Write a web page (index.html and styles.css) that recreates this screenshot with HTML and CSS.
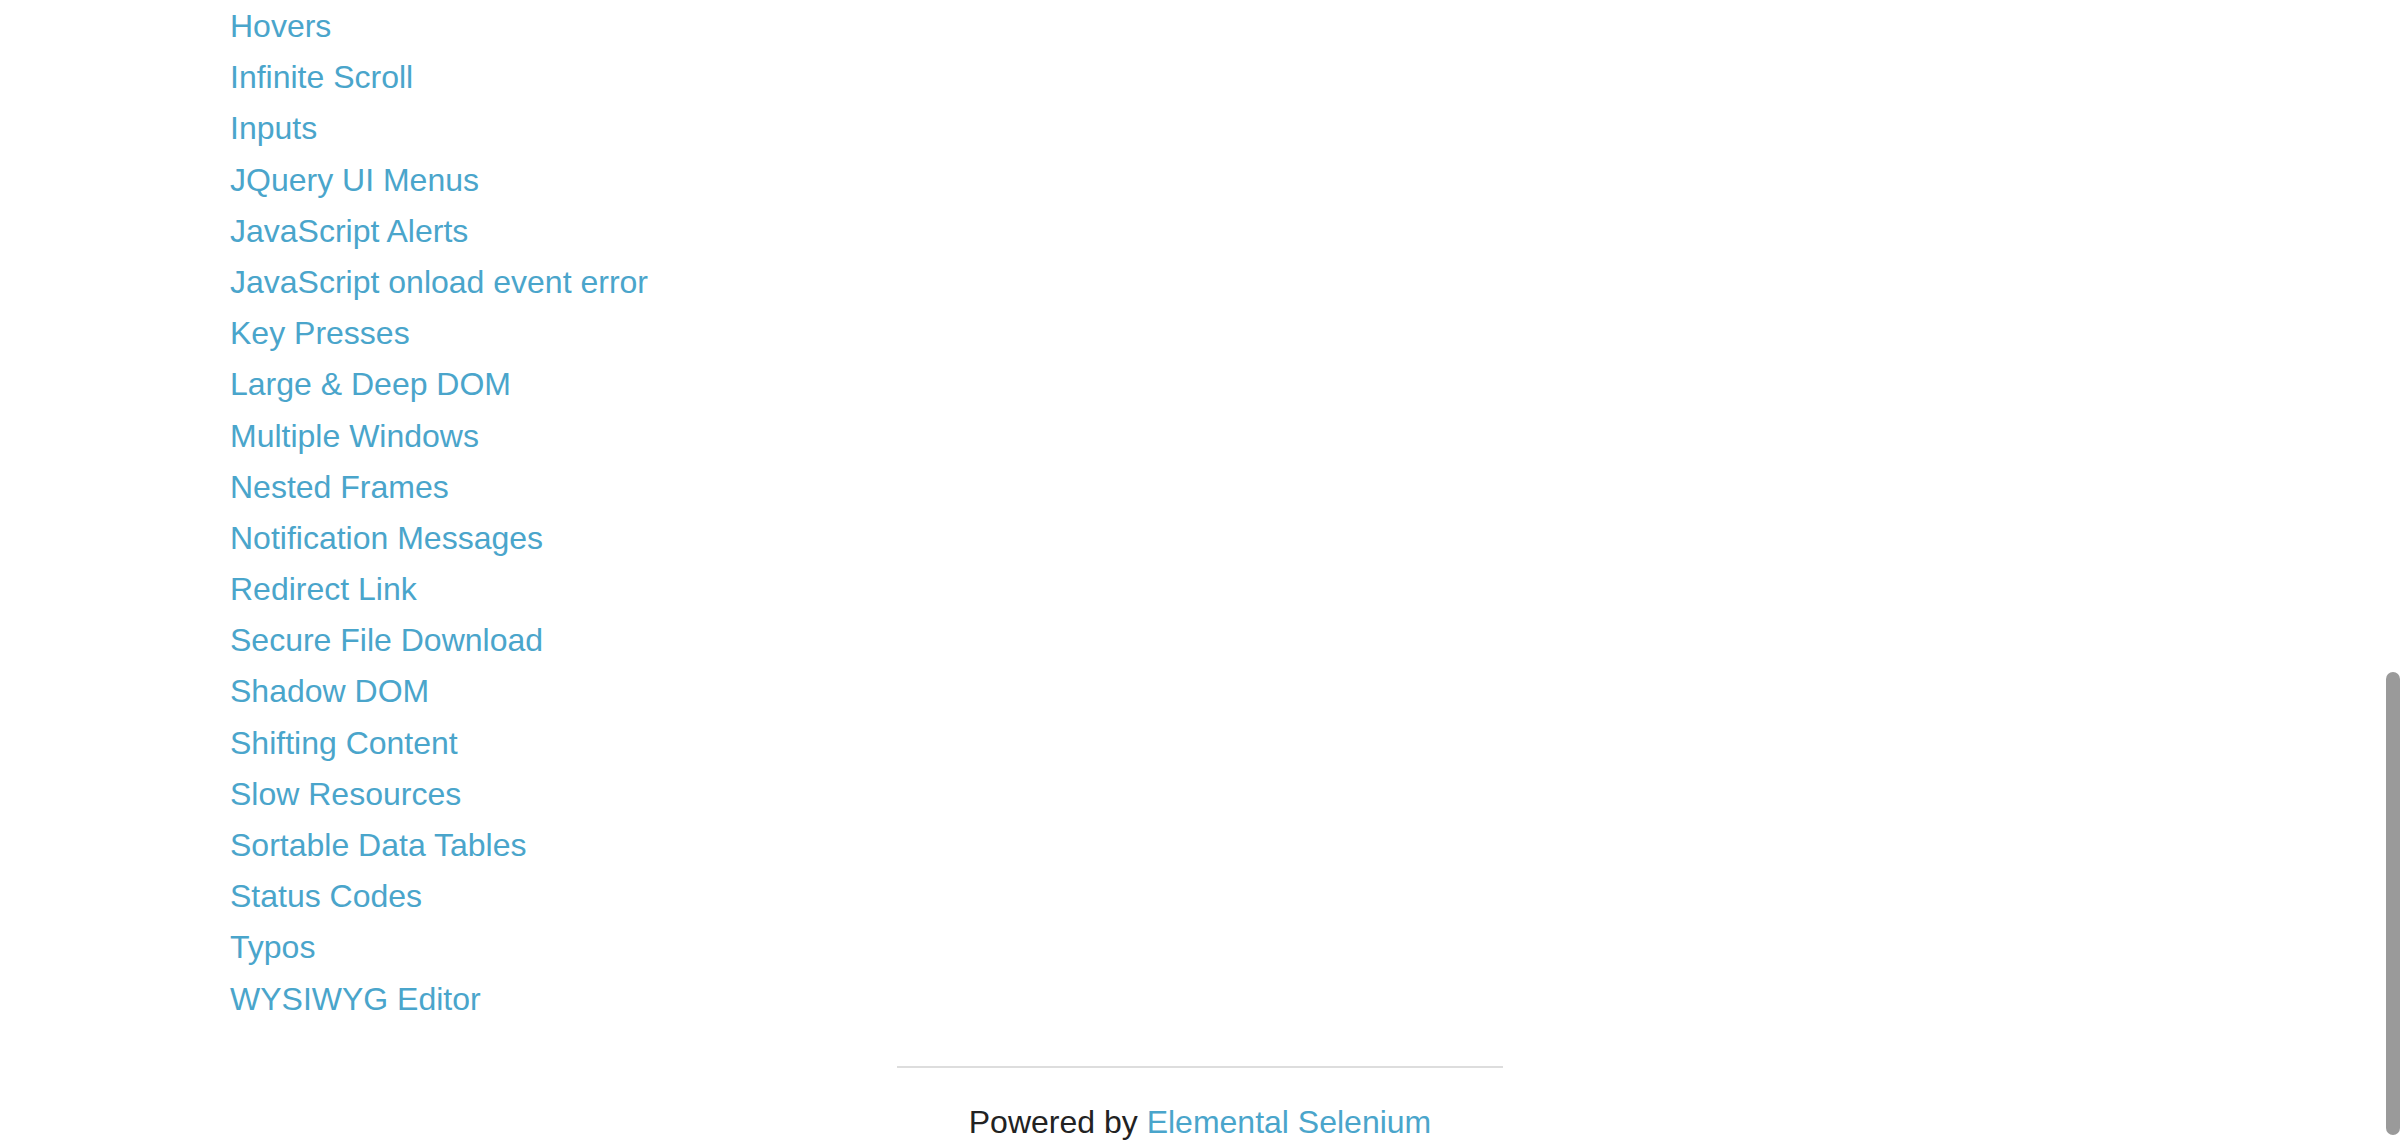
FILE: index.html
```html
<!DOCTYPE html>
<html lang="en">
<head>
<meta charset="utf-8">
<title>The Internet</title>
<link rel="stylesheet" href="styles.css">
</head>
<body>
<div class="row">
  <div class="columns">
    <ul class="links">
      <li><a href="#">Hovers</a></li>
      <li><a href="#">Infinite Scroll</a></li>
      <li><a href="#">Inputs</a></li>
      <li><a href="#">JQuery UI Menus</a></li>
      <li><a href="#">JavaScript Alerts</a></li>
      <li><a href="#">JavaScript onload event error</a></li>
      <li><a href="#">Key Presses</a></li>
      <li><a href="#">Large &amp; Deep DOM</a></li>
      <li><a href="#">Multiple Windows</a></li>
      <li><a href="#">Nested Frames</a></li>
      <li><a href="#">Notification Messages</a></li>
      <li><a href="#">Redirect Link</a></li>
      <li><a href="#">Secure File Download</a></li>
      <li><a href="#">Shadow DOM</a></li>
      <li><a href="#">Shifting Content</a></li>
      <li><a href="#">Slow Resources</a></li>
      <li><a href="#">Sortable Data Tables</a></li>
      <li><a href="#">Status Codes</a></li>
      <li><a href="#">Typos</a></li>
      <li><a href="#">WYSIWYG Editor</a></li>
    </ul>
  </div>
</div>
<div class="row footer-row">
  <div class="footer-col">
    <hr class="rule">
    <div class="powered">Powered by <a href="#">Elemental Selenium</a></div>
  </div>
</div>
<div class="scrollbar"><div class="thumb"></div></div>
</body>
</html>
```

FILE: styles.css
```css
html, body {
  margin: 0;
  padding: 0;
}
body {
  position: relative;
  height: 1140px;
  overflow: hidden;
  background: #fff;
  color: #222;
  font-family: "Liberation Sans", Arial, Helvetica, sans-serif;
  font-size: 32px;
}
a {
  color: #4aa5cb;
  text-decoration: none;
}
.row {
  max-width: 2000px;
  margin: 0 auto;
}
.columns {
  padding: 1px 30px 0;
}
.links {
  margin: 0;
  padding: 0;
  list-style: none;
  line-height: 1.6;
}
.footer-col {
  width: 666.667px;
  box-sizing: border-box;
  margin: 0 auto;
  padding: 0 30px;
}
.rule {
  margin: 41px 0 36px;
  height: 0;
  border: 0;
  border-top: 2px solid #ddd;
}
.powered {
  text-align: center;
  line-height: normal;
}
.scrollbar {
  position: absolute;
  top: 0;
  right: 0;
  width: 18px;
  height: 1140px;
}
.thumb {
  position: absolute;
  left: 4px;
  top: 672px;
  width: 14px;
  height: 463px;
  border-radius: 7px;
  background: #9a9a9a;
}
```
